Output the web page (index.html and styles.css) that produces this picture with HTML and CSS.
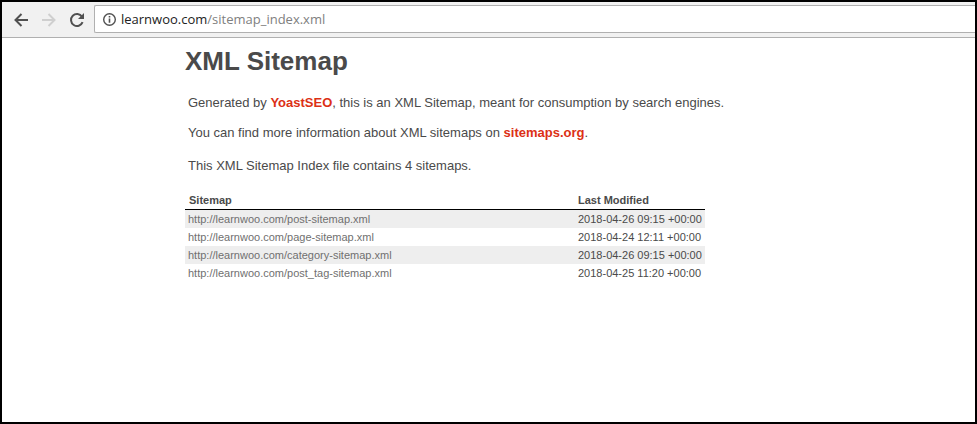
FILE: index.html
```html
<!DOCTYPE html>
<html lang="en">
<head>
    <meta charset="UTF-8">
    <meta name="viewport" content="width=device-width, initial-scale=1.0">
    <title>XML Sitemap</title>
    <link rel="stylesheet" href="styles.css">
</head>
<body>
    <div class="window">
        <div class="toolbar">
            <div class="nav-buttons">
                <svg class="nav-icon" viewBox="0 0 16 16"><path d="M15 8H2.5M8.5 2 2.5 8l6 6" fill="none" stroke="#505050" stroke-width="2"/></svg>
                <svg class="nav-icon" viewBox="0 0 16 16"><path d="M1 8h12.5M7.5 2l6 6-6 6" fill="none" stroke="#cfcfcf" stroke-width="2"/></svg>
                <svg class="nav-icon" viewBox="0 0 16 16"><path d="M13.6 10.2A6 6 0 1 1 13 4.6" fill="none" stroke="#505050" stroke-width="2"/><path d="M15 1v6H9z" fill="#505050"/></svg>
            </div>
            <div class="address-bar">
                <svg class="info-icon" viewBox="0 0 16 16"><circle cx="8" cy="8" r="6.2" fill="none" stroke="#505050" stroke-width="1.5"/><path d="M8 7v4.5M8 4.2v1.6" stroke="#505050" stroke-width="1.7"/></svg>
                <span class="url">learnwoo.com<span class="url-path">/sitemap_index.xml</span></span>
            </div>
        </div>
        <div class="content">
            <h1>XML Sitemap</h1>
            <p class="intro first">Generated by <a href="#">YoastSEO</a>, this is an XML Sitemap, meant for consumption by search engines.</p>
            <p class="intro">You can find more information about XML sitemaps on <a href="#">sitemaps.org</a>.</p>
            <p class="intro count">This XML Sitemap Index file contains 4 sitemaps.</p>
            <table class="sitemap-table">
                <thead>
                    <tr><th>Sitemap</th><th>Last Modified</th></tr>
                </thead>
                <tbody>
                    <tr class="shaded"><td><a href="#">http://learnwoo.com/post-sitemap.xml</a></td><td>2018-04-26 09:15 +00:00</td></tr>
                    <tr><td><a href="#">http://learnwoo.com/page-sitemap.xml</a></td><td>2018-04-24 12:11 +00:00</td></tr>
                    <tr class="shaded"><td><a href="#">http://learnwoo.com/category-sitemap.xml</a></td><td>2018-04-26 09:15 +00:00</td></tr>
                    <tr><td><a href="#">http://learnwoo.com/post_tag-sitemap.xml</a></td><td>2018-04-25 11:20 +00:00</td></tr>
                </tbody>
            </table>
        </div>
    </div>
</body>
</html>
```

FILE: styles.css
```css
* {
    box-sizing: border-box;
}
html, body {
    height: 100%;
}
body {
    margin: 0;
    overflow: hidden;
    font-family: "Liberation Sans", Arial, sans-serif;
    background-color: #ffffff;
}
.window {
    height: 100%;
    border: 2px solid #000000;
}
.toolbar {
    display: flex;
    height: 36px;
    padding-top: 3px;
    background: #f1f1f1;
    border-bottom: 1px solid #b0b0b0;
}
.nav-buttons {
    display: flex;
    gap: 12px;
    padding: 7px 0 0 11px;
    width: 92px;
}
.nav-icon {
    width: 16px;
    height: 16px;
}
.address-bar {
    flex: 1;
    display: flex;
    align-items: center;
    height: 28px;
    background: #ffffff;
    border: 1px solid #b0b0b0;
    border-right: none;
    border-radius: 2px 0 0 2px;
    padding-left: 7px;
}
.info-icon {
    width: 15px;
    height: 15px;
    margin-right: 4px;
}
.url {
    font-family: "Open Sans", sans-serif;
    font-size: 13px;
    color: #222222;
}
.url-path {
    color: #808080;
}
.content {
    width: 520px;
    margin-left: 183px;
}
h1 {
    margin: 0;
    padding-top: 7px;
    font-size: 26px;
    line-height: 32px;
    color: #4a4a4a;
}
.intro {
    margin: 14px 0 0;
    padding-left: 3px;
    font-size: 13px;
    line-height: 16px;
    white-space: nowrap;
    color: #4a4a4a;
}
.intro a {
    color: #dc3015;
    font-weight: bold;
    text-decoration: none;
}
.intro.first {
    margin-top: 18px;
}
.intro.count {
    margin-top: 17px;
}
.sitemap-table {
    width: 520px;
    margin-top: 16px;
    border-spacing: 0;
    table-layout: fixed;
    font-size: 11px;
    color: #4a4a4a;
}
.sitemap-table th {
    height: 20px;
    padding: 0 3px 0 4px;
    text-align: left;
    border-bottom: 1px solid #000000;
}
.sitemap-table th:first-child {
    width: 390px;
}
.sitemap-table th:last-child {
    padding-left: 3px;
}
.sitemap-table td {
    height: 18px;
    padding: 0 3px;
}
.sitemap-table a {
    color: #707070;
    text-decoration: none;
}
.shaded {
    background: #eeeeee;
}
```
